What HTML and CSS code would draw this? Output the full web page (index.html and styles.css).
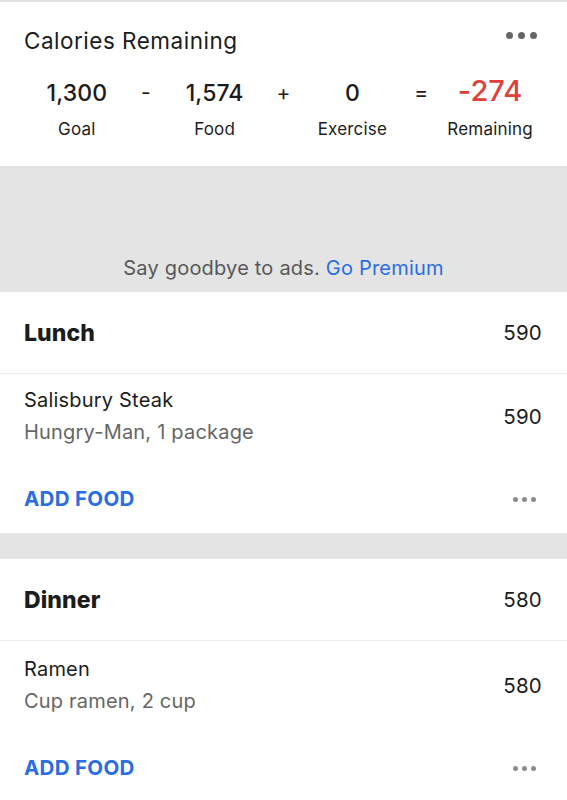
FILE: index.html
```html
<!DOCTYPE html>
<html>
<head>
<meta charset="utf-8">
<link rel="stylesheet" href="styles.css">
</head>
<body>
<div class="page">
  <section class="summary">
    <div class="summary-head">
      <h1 class="title">Calories Remaining</h1>
      <span class="dots dots-lg"><i></i><i></i><i></i></span>
    </div>
    <div class="equation">
      <div class="col"><span class="num">1,300</span><span class="lbl">Goal</span></div>
      <div class="op">-</div>
      <div class="col"><span class="num">1,574</span><span class="lbl">Food</span></div>
      <div class="op">+</div>
      <div class="col"><span class="num">0</span><span class="lbl">Exercise</span></div>
      <div class="op">=</div>
      <div class="col"><span class="num neg">-274</span><span class="lbl">Remaining</span></div>
    </div>
  </section>

  <section class="ad">
    <p class="ad-text">Say goodbye to ads. <span class="link">Go Premium</span></p>
  </section>

  <section class="meal">
    <div class="meal-head">
      <span class="meal-name">Lunch</span>
      <span class="meal-cal">590</span>
    </div>
    <div class="item">
      <div class="item-info">
        <span class="item-name">Salisbury Steak</span>
        <span class="item-sub">Hungry-Man, 1 package</span>
      </div>
      <span class="item-cal">590</span>
    </div>
    <div class="meal-foot">
      <span class="add">ADD FOOD</span>
      <span class="dots dots-sm"><i></i><i></i><i></i></span>
    </div>
  </section>

  <div class="gap"></div>

  <section class="meal meal-last">
    <div class="meal-head">
      <span class="meal-name">Dinner</span>
      <span class="meal-cal">580</span>
    </div>
    <div class="item">
      <div class="item-info">
        <span class="item-name">Ramen</span>
        <span class="item-sub">Cup ramen, 2 cup</span>
      </div>
      <span class="item-cal">580</span>
    </div>
    <div class="meal-foot">
      <span class="add">ADD FOOD</span>
      <span class="dots dots-sm"><i></i><i></i><i></i></span>
    </div>
  </section>
</div>
</body>
</html>
```

FILE: styles.css
```css
* { box-sizing: border-box; margin: 0; padding: 0; }
html, body { background: #fff; }
body {
  font-family: Inter, "Noto Sans", sans-serif;
  color: #1c1c1c;
  width: 567px;
  overflow: hidden;
}
.page { border-top: 2px solid #e4e4e4; }

.summary { height: 164px; }
.summary-head {
  display: flex;
  justify-content: space-between;
  align-items: flex-start;
  padding: 25px 30px 0 24px;
  height: 66px;
}
.title { font-size: 22.5px; font-weight: 400; line-height: 28px; letter-spacing: 0.5px; }
.dots { display: flex; }
.dots i { display: block; border-radius: 50%; }
.dots-lg { gap: 5px; margin-top: 5px; }
.dots-lg i { width: 7px; height: 7px; background: #666; }
.dots-sm { gap: 4px; }
.dots-sm i { width: 5px; height: 5px; background: #8a8a8a; }

.equation {
  display: grid;
  grid-template-columns: 1fr 0 1fr 0 1fr 0 1fr;
  padding: 10px 8px 0;
}
.col { display: flex; flex-direction: column; align-items: center; }
.num { font-size: 23px; line-height: 30px; height: 30px; font-weight: 500; display: flex; align-items: center; letter-spacing: 0.1px; }
.num.neg { color: #e0403b; font-size: 29px; margin-top: -5px; height: 35px; line-height: 35px; }
.lbl { font-size: 17px; line-height: 22px; margin-top: 10px; letter-spacing: 0.2px; }
.op {
  display: flex;
  justify-content: center;
  width: 0;
  font-size: 21px;
  line-height: 30px;
  white-space: nowrap;
}

.ad {
  background: #e4e4e4;
  height: 126px;
  display: flex;
  align-items: flex-end;
  justify-content: center;
  padding-bottom: 11px;
}
.ad-text { font-size: 20px; color: #585858; line-height: 26px; letter-spacing: 0.2px; }
.link { color: #2a6de2; }

.meal { background: #fff; }
.meal-head {
  display: flex;
  justify-content: space-between;
  align-items: center;
  height: 82px;
  padding: 0 25px 0 24px;
  border-bottom: 1px solid #ebebeb;
}
.meal-name { font-size: 23px; font-weight: 800; letter-spacing: 0.1px; }
.meal-cal { font-size: 20.5px; letter-spacing: 0.2px; }
.item {
  display: flex;
  justify-content: space-between;
  align-items: center;
  padding: 13px 25px 0 24px;
}
.meal-last .item { padding-top: 15px; }
.item-info { display: flex; flex-direction: column; }
.item-name { font-size: 20px; line-height: 26px; letter-spacing: 0.2px; }
.item-sub { font-size: 20px; line-height: 26px; color: #666; margin-top: 6px; letter-spacing: 0.2px; }
.item-cal { font-size: 20.5px; letter-spacing: 0.2px; }
.meal-foot {
  display: flex;
  justify-content: space-between;
  align-items: center;
  padding: 41px 31px 21px 24px;
}
.add { font-size: 20.5px; font-weight: 700; color: #2a6de2; line-height: 26px; letter-spacing: 0.3px; }

.gap { height: 26px; background: #e4e4e4; }
```
